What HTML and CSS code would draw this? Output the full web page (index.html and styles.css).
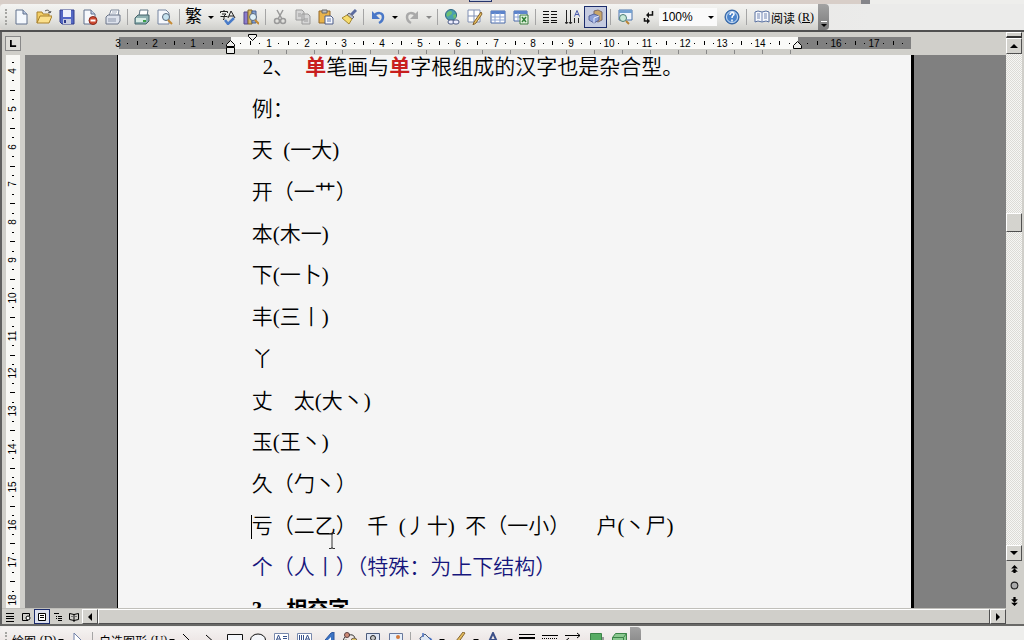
FILE: index.html
```html
<!DOCTYPE html>
<html lang="zh-CN">
<head>
<meta charset="utf-8">
<title>文档</title>
<link rel="stylesheet" href="styles.css">
</head>
<body>
<div class="app">
  <div class="strip"><div class="strip-bar"><span class="strip-mark"></span></div></div>
  <header class="toolbar">
    <div class="bar">
      <span class="grip"></span>
      <button class="btn" aria-label="新建"><svg viewBox="0 0 16 16"><path d="M3 1h7l4 4v10H3z" fill="#f4f8fd" stroke="#60708c"/><path d="M10 1v4h4" fill="#b9c9e4" stroke="#60708c"/></svg></button>
      <button class="btn" aria-label="打开"><svg viewBox="0 0 16 16"><path d="M1 14V3h5l1 2h6v3" fill="#f3cf66" stroke="#a8802c"/><path d="M1 14l3-7h12l-3 7z" fill="#fbe08c" stroke="#a8802c"/><path d="M9 2c3-2 5 0 5 2m-2-1l2 1 1-2" fill="none" stroke="#555"/></svg></button>
      <button class="btn" aria-label="保存"><svg viewBox="0 0 16 16"><path d="M1 1h14v14H3l-2-2z" fill="#5468c4" stroke="#303c8c"/><path d="M4 1h8v7H4z" fill="#eef2fb"/><path d="M4 10h8v5H4z" fill="#c9cee0"/><path d="M5 11h2v3H5z" fill="#303c8c"/></svg></button>
      <button class="btn" aria-label="权限"><svg viewBox="0 0 16 16"><path d="M2 1h7l4 4v10H2z" fill="#f6f8fc" stroke="#60708c"/><path d="M9 1v4h4" fill="#c4d0e6" stroke="#60708c"/><circle cx="11" cy="11.500" r="4" fill="#cf4a32" stroke="#8d2c1c"/><path d="M8.500 11.500h5" stroke="#fff" stroke-width="2"/></svg></button>
      <button class="btn" aria-label="电子邮件"><svg viewBox="0 0 16 16"><path d="M4 7l2-6h8l-1 6" fill="#fff" stroke="#7a8699"/><path d="M1 8l2-2h12v6l-2 3H1z" fill="#dde2ec" stroke="#6a7488"/><path d="M3 10h8M3 12h8" fill="none" stroke="#8c96aa"/><path d="M7 3h5M6 5h5" stroke="#a4aec0"/></svg></button>
      <span class="sep"></span>
      <button class="btn" aria-label="打印"><svg viewBox="0 0 16 16"><path d="M5 7l1-6h8l-1 6" fill="#fff" stroke="#5e7484"/><path d="M1 9l3-3h11v6l-3 3H1z" fill="#8cafb0" stroke="#44646c"/><path d="M2 9h10v4H2z" fill="#d9ece6"/><path d="M9 12h3" stroke="#3ba046" stroke-width="2"/></svg></button>
      <button class="btn" aria-label="打印预览"><svg viewBox="0 0 16 16"><path d="M1 1h8l3 3v11H1z" fill="#f6f8fc" stroke="#7484a0"/><circle cx="9" cy="8" r="3.500" fill="#c6e2ef" stroke="#56687c"/><path d="M11 11l4 4" stroke="#c58a34" stroke-width="2"/></svg></button>
      <span class="sep"></span>
      <button class="btn glyph" aria-label="繁体">繁</button>
      <button class="drop" aria-label="繁体选项"><i class="tri"></i></button>
      <button class="btn" aria-label="拼写和语法"><svg viewBox="0 0 16 16"><path d="M.5 4V2.500h7V4M4 1v1M2 5h4L4 7v3.500H3M.5 7.500h7" fill="none" stroke="#222"/><path d="M8 9l3-7 4 7M9 7h5" fill="none" stroke="#222"/><path d="M5 11l3 4 6-6" fill="none" stroke="#4a7cc8" stroke-width="2.500"/></svg></button>
      <button class="btn" aria-label="信息检索"><svg viewBox="0 0 16 16"><path d="M1 3h4v12H1z" fill="#8b7ccc" stroke="#54488c"/><path d="M5 1h4v14H5z" fill="#d9b964" stroke="#84682c"/><path d="M9 2h4v12H9z" fill="#83a0d4" stroke="#4c6490"/><circle cx="10" cy="8" r="3.500" fill="#def0f8" stroke="#58687c"/><path d="M12 11l4 4" stroke="#c58a34" stroke-width="2"/></svg></button>
      <span class="sep"></span>
      <button class="btn" aria-label="剪切"><svg viewBox="0 0 16 16"><path d="M5 1l5 9M11 1L6 10" stroke="#999" stroke-width="1.500"/><circle cx="5" cy="12" r="2.500" fill="none" stroke="#999" stroke-width="1.500"/><circle cx="11" cy="12" r="2.500" fill="none" stroke="#999" stroke-width="1.500"/></svg></button>
      <button class="btn" aria-label="复制"><svg viewBox="0 0 16 16"><path d="M1 1h6l2 2v8H1zM7 5h6l2 2v8H7z" fill="#d6d6d6" stroke="#9b9b9b"/><path d="M3 5h3M3 7h3M9 10h4M9 12h4" stroke="#9b9b9b"/></svg></button>
      <button class="btn" aria-label="粘贴"><svg viewBox="0 0 16 16"><path d="M1 2h11v12H1z" fill="#e8b34a" stroke="#93692a"/><path d="M4 1h5v3H4z" fill="#bdbdbd" stroke="#666"/><path d="M7 7h6l2 2v6H7z" fill="#f6f8fd" stroke="#4c5c88"/><path d="M9 10h4M9 12h4" stroke="#6078b0"/></svg></button>
      <button class="btn" aria-label="格式刷"><svg viewBox="0 0 16 16"><path d="M15 1l-5 5" stroke="#5c6ca0" stroke-width="3"/><path d="M8 4l5 4-2 2-5-4z" fill="#b9c0cc" stroke="#667"/><path d="M6 6l5 4-3 5-7-6z" fill="#f6dc6c" stroke="#a58832"/></svg></button>
      <span class="sep"></span>
      <button class="btn" aria-label="撤消"><svg viewBox="0 0 16 16"><path d="M4 7c3-4 9-4 9 1 0 3-2 5-4 6" fill="none" stroke="#4a78c8" stroke-width="2.500"/><path d="M2 2v8h8z" fill="#4a78c8"/></svg></button>
      <button class="drop" aria-label="撤消列表"><i class="tri"></i></button>
      <button class="btn" aria-label="恢复"><svg viewBox="0 0 16 16"><path d="M12 7C9 3 3 3 3 8c0 3 2 5 4 6" fill="none" stroke="#a9a9a9" stroke-width="2.500"/><path d="M14 2v8H6z" fill="#a9a9a9"/></svg></button>
      <button class="drop" aria-label="恢复列表"><i class="tri off"></i></button>
      <span class="sep"></span>
      <button class="btn" aria-label="超链接"><svg viewBox="0 0 16 16"><circle cx="7" cy="6" r="5.500" fill="#4b9fb0" stroke="#2e6480"/><path d="M3 4c3-3 5-2 5 0s-3 2-4 4c-2-1-2-3-1-4zM9 6l3-1v3l-2 2z" fill="#6cc070"/><rect x="4" y="11" width="6" height="4" rx="2" fill="#eef" stroke="#4c5c84"/><rect x="9" y="11" width="6" height="4" rx="2" fill="#eef" stroke="#4c5c84"/></svg></button>
      <button class="btn" aria-label="表格和边框"><svg viewBox="0 0 16 16"><path d="M1 1h12v12H1zM7 1v12M1 7h12" fill="#fff" stroke="#8090b4"/><path d="M14 3L7 13l-1 3 3-2 6-9z" fill="#eec462" stroke="#84622c"/></svg></button>
      <button class="btn" aria-label="插入表格"><svg viewBox="0 0 16 16"><path d="M1 2h14v12H1z" fill="#fff" stroke="#4868a8"/><path d="M1 2h14v3H1z" fill="#5c84cc"/><path d="M1 8h14M1 11h14M5 4v10M10 4v10" stroke="#8ca4d4"/></svg></button>
      <button class="btn" aria-label="插入 Excel 表"><svg viewBox="0 0 16 16"><path d="M1 2h13v10H1z" fill="#fff" stroke="#4868a8"/><path d="M1 2h13v3H1z" fill="#5c84cc"/><path d="M1 8h13M5 4v8" stroke="#8ca4d4"/><path d="M7 6h8v9H7z" fill="#e2f2dd" stroke="#3c7c40"/><path d="M9 8l4 5M13 8l-4 5" stroke="#2f8038" stroke-width="1.500"/></svg></button>
      <span class="sep"></span>
      <button class="btn" aria-label="分栏"><svg viewBox="0 0 16 16"><path d="M1 2.500h6M1 5.500h6M1 8.500h6M1 11.500h6M1 13.500h6M9 2.500h6M9 5.500h6M9 8.500h6M9 11.500h6M9 13.500h6" stroke="#111"/></svg></button>
      <button class="btn" aria-label="文字方向"><svg viewBox="0 0 16 16"><path d="M1.500 1v13M5.500 1v13M9.500 9v5M13.500 9v5" stroke="#222"/><path d="M0 13l1.500 2L3 13M4 13l1.500 2L7 13" fill="none" stroke="#222"/><path d="M9.500 7.500l2.500-6 2.500 6M10 5.500h4" fill="none" stroke="#4a5cac"/></svg></button>
      <button class="btn active" aria-label="绘图"><svg viewBox="0 0 16 16"><path d="M6 2l4-1 4 2v8l-4 2-4-2z" fill="#c9a668" stroke="#7c6a68"/><path d="M1 7l5-2 5 2v4l-5 3-5-3z" fill="#8ca0d8" stroke="#56649c"/><path d="M6 9v5M6 9l5-2" stroke="#e8ecfa"/></svg></button>
      <span class="sep"></span>
      <button class="btn" aria-label="文档结构图"><svg viewBox="0 0 16 16"><path d="M2 1h13v10H2z" fill="#eef4fc" stroke="#4c74ac"/><path d="M2 1h13v3H2z" fill="#74a0d0"/><circle cx="6" cy="9" r="3.500" fill="#c9ead8" stroke="#4c7c74"/><path d="M9 12l3 3" stroke="#b88434" stroke-width="2"/></svg></button>
      <button class="btn" aria-label="显示编辑标记"><svg viewBox="0 0 16 16"><path d="M12.500 2v4H8M4.500 9v3H8" fill="none" stroke="#111" stroke-width="1.500"/><path d="M9 3v6L6 6zM7 9v6l3-3z" fill="#111"/></svg></button>
      <div class="zoom"><select aria-label="显示比例"><option>100%</option></select><i class="tri"></i></div>
      <button class="btn" aria-label="帮助"><svg viewBox="0 0 16 16"><circle cx="8" cy="8" r="7" fill="#4a84cc" stroke="#2c5c9c"/><circle cx="8" cy="8" r="5.500" fill="none" stroke="#cfe0f4"/><path d="M6 6c0-3 4-3 4-1 0 2-2 1-2 4M8 10.500v2" fill="none" stroke="#fff" stroke-width="1.500"/></svg></button>
      <span class="sep"></span>
      <button class="read"><svg viewBox="0 0 16 16"><path d="M1 3l3-1 4 1 4-1 3 1v10l-3-1-4 1-4-1-3 1z" fill="#f6f8fd" stroke="#5870a0"/><path d="M8 3v10M3 5h3M3 7h3M3 9h3M10 5h3M10 7h3M10 9h3" stroke="#7488b4"/></svg>阅读<span>(<u>R</u>)</span></button>
      <button class="more" aria-label="工具栏选项"><i class="dash"></i><i class="tri"></i></button>
    </div>
  </header>

  <main class="work">
    <div class="pane">
      <div class="ruler-row">
        <button class="tab" aria-label="制表符"><svg viewBox="0 0 8 8"><path d="M1 0v7h6" fill="none" stroke="#000" stroke-width="2"/></svg></button>
        <svg class="hruler" id="hruler"></svg>
      </div>
      <div class="view">
        <svg class="vruler" id="vruler"></svg>
        <div class="desk">
          <article class="page">
            <p class="item"><span>2、</span><span><b class="red">单</b>笔画与<b class="red">单</b>字根组成的汉字也是杂合型。</span></p>
            <p>例：</p>
            <p>天&nbsp; (一大)</p>
            <p>开（一艹）</p>
            <p>本(木一)</p>
            <p>下(一卜)</p>
            <p>丰(三丨)</p>
            <p>丫</p>
            <p>丈　太(大丶)</p>
            <p>玉(王丶)</p>
            <p>久（勹丶）</p>
            <p class="caret">亏（二乙）&nbsp; 千&nbsp; (丿十)&nbsp; 不（一小）　&nbsp;&nbsp; 户(丶尸)</p>
            <p class="blue">个（人丨）（特殊：为上下结构）</p>
            <h2><span>3</span><span>相交字</span></h2>
          </article>
          <svg class="pointer" viewBox="0 0 8 16"><path d="M1 .5h2.500l.5 1 .5-1H7M4 1v14M1 15.500h2.500l.5-1 .5 1H7" fill="none" stroke="#333"/></svg>
        </div>
      </div>
      <div class="hscroll">
        <button class="vbtn" aria-label="普通视图"><svg viewBox="0 0 10 10"><path d="M1 1.500h8M1 4.500h8M1 6.500h8M1 9.500h8" stroke="#000"/></svg></button>
        <button class="vbtn" aria-label="Web 版式视图"><svg viewBox="0 0 10 10"><path d="M7 8.500H1.500v-7h7V4" fill="none" stroke="#000"/><circle cx="7" cy="6" r="2" fill="#fff" stroke="#000"/></svg></button>
        <button class="vbtn on" aria-label="页面视图"><svg viewBox="0 0 10 10"><path d="M1.500 1.500h7v7h-7z" fill="#fff" stroke="#000"/><path d="M3 3.500h4M3 5.500h4" stroke="#000"/></svg></button>
        <button class="vbtn" aria-label="大纲视图"><svg viewBox="0 0 10 10"><path d="M1 1.500h5M3 4.500h1M5 4.500h4M3 6.500h1M5 6.500h4M5 8.500h4" stroke="#000"/></svg></button>
        <button class="vbtn" aria-label="阅读版式"><svg viewBox="0 0 10 10"><path d="M.5 1.500l4.500 1 4.500-1v6l-4.500 1-4.500-1zM5 2v8" fill="none" stroke="#000"/><path d="M2 4.500h2M6 4.500h2" stroke="#777"/></svg></button>
        <button class="sbtn" aria-label="向左滚动"><i class="tri left"></i></button>
        <div class="hthumb"></div>
        <button class="sbtn" aria-label="向右滚动"><i class="tri right"></i></button>
      </div>
    </div>
    <div class="vscroll">
      <div class="split"></div>
      <button class="sbtn" aria-label="向上滚动"><i class="tri up"></i></button>
      <div class="track"><div class="vthumb"></div></div>
      <button class="sbtn" aria-label="向下滚动"><i class="tri down"></i></button>
      <button class="browse" aria-label="前一页"><svg viewBox="0 0 8 8"><path d="M4 0l3 3H1zM4 3l3 3H1zM3 6h2v1H3z"/></svg></button>
      <button class="browse" aria-label="选择浏览对象"><svg viewBox="0 0 8 8"><circle cx="4" cy="4" r="3" fill="#aaa" stroke="#222"/></svg></button>
      <button class="browse" aria-label="下一页"><svg viewBox="0 0 8 8"><path d="M4 5l3-3H1zM4 8l3-3H1zM3 0h2v2H3z"/></svg></button>
    </div>
  </main>

  <footer class="draw">
    <div class="bar">
      <span class="grip"></span>
      <button class="menu wide-1">绘图<span>(<u>D</u>)</span><i class="tri"></i></button>
      <button class="btn" aria-label="选择对象"><svg viewBox="0 0 16 16"><path d="M4 1l9 9H9l2 5-2 1-3-5-2 2z" fill="#fff" stroke="#7080a8"/></svg></button>
      <span class="sep"></span>
      <button class="menu wide-2">自选图形<span>(<u>U</u>)</span><i class="tri"></i></button>
      <button class="btn" aria-label="直线"><svg viewBox="0 0 16 16"><path d="M2 2l12 12" stroke="#000"/></svg></button>
      <button class="btn" aria-label="箭头"><svg viewBox="0 0 16 16"><path d="M2 3l10 9" stroke="#000"/><path d="M9 12l5 2-2-6z"/></svg></button>
      <button class="btn" aria-label="矩形"><svg viewBox="0 0 16 16"><path d="M.5 2.500h15v11H.5z" fill="#f4f6fa" stroke="#111"/></svg></button>
      <button class="btn" aria-label="椭圆"><svg viewBox="0 0 16 16"><ellipse cx="8" cy="8" rx="7.500" ry="6" fill="#f4f6fa" stroke="#111"/></svg></button>
      <button class="btn" aria-label="文本框"><svg viewBox="0 0 16 16"><path d="M1.500 1.500h14v13h-14z" fill="#fff" stroke="#7888ac"/><path d="M3 9l2.500-6L8 9M4 7h3M10 4.500h4M10 6.500h4M10 8.500h4M3 11.500h11" fill="none" stroke="#38528c"/></svg></button>
      <button class="btn" aria-label="竖排文本框"><svg viewBox="0 0 16 16"><path d="M1.500 1.500h14v13h-14z" fill="#fff" stroke="#7888ac"/><path d="M9 9l2.500-6L14 9M10 7h3M3.500 3v9M5.500 3v9M7.500 3v9" fill="none" stroke="#38528c"/></svg></button>
      <button class="btn" aria-label="艺术字"><svg viewBox="0 0 16 16"><path d="M1 14L12 1l3-1v15h-5l-1-4-4 4z" fill="#3c74c4" stroke="#2c549c"/><path d="M9 8l3-3v3z" fill="#fff"/></svg></button>
      <button class="btn" aria-label="图示"><svg viewBox="0 0 16 16"><circle cx="5" cy="3" r="2.500" fill="#d08c78" stroke="#5c4040"/><path d="M7 3c5-1 6 2 6 5M3 5c-2 2-2 5-1 7" fill="none" stroke="#333"/><circle cx="12" cy="9" r="3" fill="#dfc263" stroke="#765"/><circle cx="4" cy="11" r="3" fill="#82ac74" stroke="#464"/></svg></button>
      <button class="btn" aria-label="剪贴画"><svg viewBox="0 0 16 16"><path d="M1.500 1.500h13v13h-13z" fill="#dfe6f4" stroke="#4c5c7c"/><circle cx="8" cy="6" r="2.500" fill="#c6c6c6" stroke="#222"/><path d="M4 14c0-6 8-6 8 0z" fill="#555"/></svg></button>
      <button class="btn" aria-label="图片"><svg viewBox="0 0 16 16"><path d="M1.500 1.500h13v13h-13z" fill="#e6effa" stroke="#68789c"/><circle cx="10" cy="5" r="2" fill="#d47a3c"/><path d="M2 14l5-6 7 6z" fill="#82a874"/></svg></button>
      <span class="sep"></span>
      <button class="btn" aria-label="填充颜色"><svg viewBox="0 0 16 16"><path d="M3 6l5-4 6 6-6 5-5-6z" fill="#dfe7f2" stroke="#445878"/><path d="M6 5V1M12 6c3 1 3 3 3 6" fill="none" stroke="#4c74c4" stroke-width="1.500"/></svg></button>
      <button class="drop" aria-label="填充选项"><i class="tri"></i></button>
      <button class="btn" aria-label="线条颜色"><svg viewBox="0 0 16 16"><path d="M14 1l-2-1-7 9-1 3 3-1z" fill="#e4bc5c" stroke="#856632"/><path d="M1 11c2-3 4-1 6 0" fill="none" stroke="#4878c4" stroke-width="2"/></svg></button>
      <button class="drop" aria-label="线条选项"><i class="tri"></i></button>
      <button class="btn" aria-label="字体颜色"><svg viewBox="0 0 16 16"><path d="M3 12L8 1l5 11M5 8h6" fill="none" stroke="#3c5088" stroke-width="2"/><path d="M1 13h14v3H1z" fill="#c33"/></svg></button>
      <button class="drop" aria-label="字体颜色选项"><i class="tri"></i></button>
      <button class="btn" aria-label="线型"><svg viewBox="0 0 16 16"><path d="M0 2.500h16" stroke="#000"/><path d="M0 6h16" stroke="#000" stroke-width="2"/><path d="M0 11h16" stroke="#000" stroke-width="3"/></svg></button>
      <button class="btn" aria-label="虚线线型"><svg viewBox="0 0 16 16"><path d="M0 3.500h16" stroke="#000"/><path d="M0 6.500h16" stroke="#000" stroke-dasharray="1 1"/><path d="M0 10.500h16" stroke="#000" stroke-dasharray="3 1"/></svg></button>
      <button class="btn" aria-label="箭头样式"><svg viewBox="0 0 16 16"><path d="M0 3.500h15M12 1l3 2.500L12 6M16 8.500H1M4 6L1 8.500 4 11M1 13.500h14" fill="none" stroke="#000"/></svg></button>
      <button class="btn" aria-label="阴影样式"><svg viewBox="0 0 16 16"><path d="M5 5h11v10H5z" fill="#999"/><path d="M2.500 1.500h11v11h-11z" fill="#58ac64" stroke="#3c8448"/></svg></button>
      <button class="btn" aria-label="三维效果样式"><svg viewBox="0 0 16 16"><path d="M1.500 5.500l3-4h11v9l-3 4h-11z" fill="#8cc890" stroke="#3c8448"/><path d="M1.500 5.500h11v9M12.500 5.500l3-4" fill="none" stroke="#3c8448"/></svg></button>
      <button class="more" aria-label="绘图工具栏选项"></button>
    </div>
  </footer>
</div>
<script src="rulers.js"></script>
</body>
</html>
```
FILE: styles.css
```css
* { box-sizing: border-box; }
body { margin: 0; background: #eeeeec; font-family: "Liberation Sans", "Noto Sans CJK SC", sans-serif; font-size: 12px; color: #000; }
button { border: 0; padding: 0; margin: 0; background: none; font: inherit; color: inherit; display: flex; align-items: center; justify-content: center; flex: none; }
.app { height: 100vh; display: flex; flex-direction: column; overflow: hidden; }

.strip { height: 4px; flex: none; }
.strip-bar { width: 85%; height: 4px; background: #d8cec8; border-right: 9px solid #85858a; display: flex; justify-content: center; padding-left: 100px; }
.strip-mark { width: 23px; height: 2px; background: #c4cbdc; border: 1px solid #26356b; border-top: 0; }

.toolbar { flex: none; padding-right: 4px; display: flex; border-bottom: 2px solid #505050; background: linear-gradient(90deg, #ddd5cf, #ebebea 85%); }
.bar { display: flex; align-items: center; height: 26px; padding-left: 3px; border-radius: 4px; background: linear-gradient(#f4f4f2, #e6e6e3 55%, #cfcfcb); }
.grip { width: 6px; height: 16px; flex: none; border-left: 2px dotted #a5a5a2; margin-left: 2px; margin-right: -2px; }
.btn { width: 23px; height: 22px; }
.btn svg, .read svg { width: 16px; height: 16px; }
.glyph { font-size: 17px; line-height: 22px; }
.active { background: #c5cbe0; border: 1px solid #1c2c6c; }
.sep { width: 6px; height: 16px; flex: none; background: linear-gradient(#a5a5a5, #a5a5a5) center / 1px 100% no-repeat; }
.drop { width: 11px; height: 22px; }
.tri { width: 0; height: 0; flex: none; border: 3px solid transparent; border-top: 3px solid #000; border-bottom: 0; }
.tri.off { border-top-color: #888; }
.tri.up { border: 4px solid transparent; border-top: 0; border-bottom-color: #000; }
.tri.down { border: 4px solid transparent; border-bottom: 0; border-top-color: #000; }
.tri.left { border: 4px solid transparent; border-left: 0; border-right-color: #000; }
.tri.right { border: 4px solid transparent; border-right: 0; border-left-color: #000; }
.zoom { display: flex; align-items: center; width: 58px; height: 18px; background: #fafafa; padding-right: 3px; margin-right: 3px; flex: none; }
.zoom select { appearance: none; border: 0; background: none; font: 12px "Liberation Sans", sans-serif; color: #000; padding: 0 0 0 3px; flex: 1; min-width: 0; }
.read { gap: 1px; padding: 0 4px 0 5px; white-space: nowrap; }
.read span, .menu span { font-family: "Liberation Serif", serif; font-size: 12px; margin-left: 2px; }
.more { width: 11px; height: 26px; background: linear-gradient(#a2a2a2, #7b7b7b); border-radius: 0 4px 4px 0; flex-direction: column; justify-content: flex-end; padding-bottom: 3px; gap: 2px; }
.dash { width: 6px; height: 1px; background: #fff; }

.work { flex: 1; min-height: 0; display: flex; background: #d0cfca; border-left: 2px solid #606060; }
.pane { flex: 1; min-width: 0; display: flex; flex-direction: column; }
.ruler-row { height: 23px; flex: none; display: flex; }
.tab { width: 16px; height: 15px; margin: 4px 2px 0 3px; border: 1px solid #888; background: #deddd8; }
.tab svg { width: 7px; height: 7px; }
.hruler { flex: 1; min-width: 0; height: 23px; }
.hruler text, .vruler text { font: 10px "Liberation Sans", sans-serif; text-anchor: middle; }
.view { flex: 1; min-height: 0; display: flex; }
.vruler { width: 14px; height: 100%; flex: none; background: #f8f8f5; margin: 0 5px 0 4px; }
.desk { flex: 1; display: flex; justify-content: center; background: #808080; position: relative; overflow: hidden; }
.page { width: 81.3%; margin: -9px 0 -22px; padding-left: 134px; background: #f5f5f5; border-left: 1px solid #000; border-right: 3px solid #000; display: grid; grid-auto-rows: 1fr; align-items: center; font-family: "Liberation Serif", "Noto Sans CJK SC", serif; font-size: 21px; font-weight: 350; line-height: 28px; }
.page p, .page h2 { margin: 0; font-size: 21px; white-space: nowrap; }
.page .item { display: flex; gap: 11px; padding-left: 11px; }
.page h2 { display: flex; gap: 24px; }
.red { color: #c81e1e; font-weight: 700; }
.page .blue { color: #16167c; }
.caret { position: relative; }
.caret::before { content: ""; position: absolute; left: -1px; top: 3px; width: 1px; height: 24px; background: #000; }
.pointer { position: absolute; left: 303px; top: 478px; width: 8px; height: 16px; }

.hscroll { height: 16px; flex: none; display: flex; border-top: 1px solid #c0bfba; }
.vbtn { width: 16px; height: 15px; }
.vbtn svg { width: 10px; height: 10px; flex: none; }
.vbtn.on { border: 1px solid #1c2c6c; background: #dde1ee; }
.sbtn { width: 16px; height: 16px; background: #d4d3ce; border: 1px solid; border-color: #fff #505050 #505050 #fff; }
.hscroll .sbtn { height: 15px; }
.hthumb { flex: 1; background: #d0cfca; border: 1px solid; border-color: #fff #505050 #505050 #fff; }
.vscroll { width: 16px; margin-right: 2px; flex: none; display: flex; flex-direction: column; padding-bottom: 15px; }
.split { height: 6px; border: 1px solid; border-color: #fff #333 #333 #fff; border-bottom-width: 2px; }
.track { flex: 1; background: repeating-conic-gradient(#f6f6f4 0 25%, #dcdbd6 0 50%) 0 0 / 2px 2px; display: flex; flex-direction: column; }
.vthumb { height: 19px; margin-top: 159px; background: #d4d3ce; border: 1px solid; border-color: #fff #505050 #505050 #fff; }
.browse { height: 16px; width: 16px; }
.browse svg { width: 9px; height: 9px; }

.draw { flex: none; height: 16px; overflow: hidden; padding-top: 1px; border-top: 2px solid #686866; background: #eeeeec; }
.draw .bar { width: max-content; background: linear-gradient(#f5f3f2, #ece5e4 60%, #d5d0cd); }
.menu { height: 22px; gap: 0; white-space: nowrap; justify-content: space-between; }
.wide-1 { width: 52px; margin: 0 2px 0 3px; }
.wide-2 { width: 76px; margin: 0 2px 0 4px; }
```
FILE: rulers.js
```js
const NS = "http://www.w3.org/2000/svg";
const UNIT = 37.8;

function add(parent, name, attrs, text) {
  const node = document.createElementNS(NS, name);
  for (const key in attrs) node.setAttribute(key, attrs[key]);
  if (text !== undefined) node.textContent = text;
  parent.appendChild(node);
}

const h = document.getElementById("hruler");
const zero = 208;
add(h, "rect", { x: 96, y: 5, width: 792, height: 12, fill: "#808080" });
add(h, "rect", { x: zero, y: 5, width: 567, height: 12, fill: "#fafaf8" });
for (let q = -12; q <= 71; q++) {
  const x = Math.round(zero + q * UNIT / 4);
  const n = Math.abs(q / 4);
  if (q % 4 === 0) {
    if (q !== 0 && n !== 15) add(h, "text", { x: x, y: 15 }, n);
  } else if (q % 2 === 0) {
    add(h, "rect", { x: x, y: 9, width: 1, height: 4 });
  } else {
    add(h, "rect", { x: x, y: 11, width: 1, height: 1 });
  }
}
for (let x = 235; x < 775; x += 28) add(h, "rect", { x: x, y: 18, width: 1, height: 4, fill: "#888" });
const marker = { fill: "#eeeeec", stroke: "#000" };
add(h, "path", { d: "M203.5 14.500v-2l4-4 4 4v2zM203.500 15.500h8v6h-8z", ...marker });
add(h, "path", { d: "M225.5 2.500h8v2l-4 4-4-4z", ...marker });
add(h, "path", { d: "M770.5 16.500v-3l4-4 4 4v3z", ...marker });

const v = document.getElementById("vruler");
for (let q = -1; q <= 57; q++) {
  const y = Math.round(16 + q * UNIT / 4);
  if (q >= 0 && q % 4 === 0) {
    add(v, "text", { x: 0, y: 0, transform: `translate(10 ${y}) rotate(-90)` }, 4 + q / 4);
  } else if (q > 0 && q % 2 === 0) {
    add(v, "rect", { x: 4, y: y, width: 5, height: 1 });
  } else {
    add(v, "rect", { x: 6, y: y, width: 2, height: 1 });
  }
}
```
